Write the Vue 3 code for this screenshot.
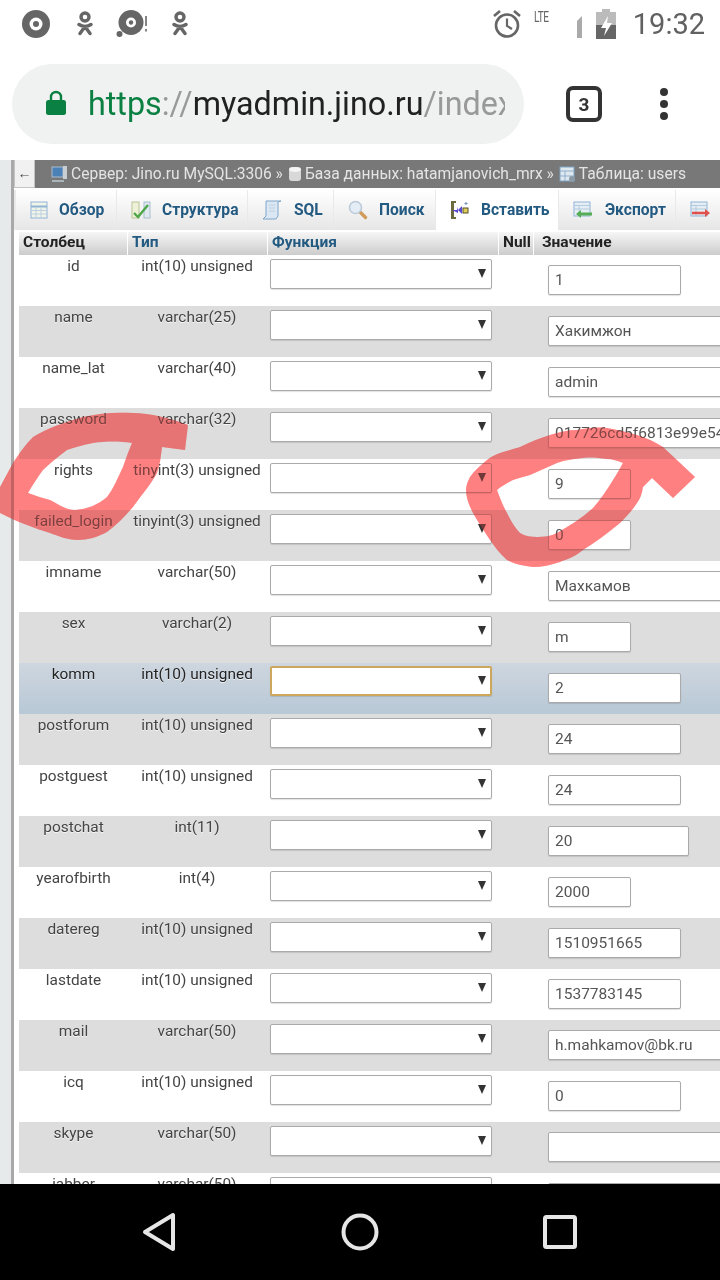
<script setup>
const rows = [
  { n: 'id', t: 'int(10) unsigned', v: '1', w: 133 },
  { n: 'name', t: 'varchar(25)', v: 'Хакимжон', w: 190, c: 'g' },
  { n: 'name_lat', t: 'varchar(40)', v: 'admin', w: 190 },
  { n: 'password', t: 'varchar(32)', v: '017726cd5f6813e99e54', w: 190, c: 'g' },
  { n: 'rights', t: 'tinyint(3) unsigned', v: '9', w: 83 },
  { n: 'failed_login', t: 'tinyint(3) unsigned', v: '0', w: 83, c: 'g' },
  { n: 'imname', t: 'varchar(50)', v: 'Махкамов', w: 190 },
  { n: 'sex', t: 'varchar(2)', v: 'm', w: 83, c: 'g' },
  { n: 'komm', t: 'int(10) unsigned', v: '2', w: 133, c: 'h', focus: true },
  { n: 'postforum', t: 'int(10) unsigned', v: '24', w: 133, c: 'g' },
  { n: 'postguest', t: 'int(10) unsigned', v: '24', w: 133 },
  { n: 'postchat', t: 'int(11)', v: '20', w: 141, c: 'g' },
  { n: 'yearofbirth', t: 'int(4)', v: '2000', w: 83 },
  { n: 'datereg', t: 'int(10) unsigned', v: '1510951665', w: 133, c: 'g' },
  { n: 'lastdate', t: 'int(10) unsigned', v: '1537783145', w: 133 },
  { n: 'mail', t: 'varchar(50)', v: 'h.mahkamov@bk.ru', w: 190, c: 'g' },
  { n: 'icq', t: 'int(10) unsigned', v: '0', w: 133 },
  { n: 'skype', t: 'varchar(50)', v: '', w: 190, c: 'g' },
  { n: 'jabber', t: 'varchar(50)', v: '', w: 190 },
]
const marks = [
  'M188 425C170 418 150 413 133 413C115 412 100 413 83 417C65 422 48 428 33 437C25 445 18 455 13 463L0 487V513C10 518 18 522 27 525C35 528 43 531 50 533C58 536 68 540 77 540C88 540 98 537 107 532C117 525 125 516 133 507C143 493 151 484 157 473C160 465 161 455 162 447L185 450ZM132 443C120 441 106 441 93 443C83 445 75 447 67 450C58 457 50 463 43 470C37 478 32 486 28 493C36 496 43 498 50 500C58 504 66 510 75 510C87 509 98 505 107 497C114 488 118 477 123 467C126 458 129 450 132 443Z',
  'M695 477L673 498L652 478L643 487C642 494 640 499 637 503C632 511 626 517 620 523C608 533 596 542 583 550C576 556 568 559 560 562C551 565 542 567 533 567C523 566 514 564 507 560C500 554 495 547 490 540C484 531 478 522 473 513C469 505 466 498 466 490C466 485 468 481 470 477C475 470 481 465 487 460C492 456 497 454 503 452C509 450 514 449 520 447C530 442 540 438 550 435C559 432 568 430 577 430C587 428 597 427 607 428C618 430 628 432 637 435C647 438 655 442 663 447ZM623 463C618 461 612 459 607 459C599 458 591 457 583 458C574 459 565 460 557 463C548 467 539 471 530 475C524 477 518 478 513 480C507 483 502 486 497 490C500 498 503 506 507 513C511 521 515 528 520 533C525 536 531 537 537 537C544 537 551 536 557 533C569 526 582 518 593 508C600 500 607 490 613 480C617 474 620 468 623 463Z',
]
</script>

<template>
  <div class="phone">
    <header class="status">
      <div class="st-left">
        <svg width="28" height="28" viewBox="0 0 28 28"><circle cx="14" cy="14" r="14" fill="#666"/><circle cx="14" cy="14" r="6.5" fill="#fff"/><circle cx="14" cy="14" r="3" fill="#666"/></svg>
        <svg class="ok" width="16" height="26" viewBox="0 0 16 26"><circle cx="8" cy="6" r="4" fill="none" stroke="#666" stroke-width="3.4"/><path d="M2 13.5c3.5 2.4 8.5 2.4 12 0M8 15.5l-5 7M8 15.5l5 7" fill="none" stroke="#666" stroke-width="3.4" stroke-linecap="round"/></svg>
        <svg class="disc2" width="34" height="28" viewBox="0 0 34 28"><circle cx="15" cy="12.5" r="12.5" fill="#666"/><circle cx="15" cy="12.5" r="5" fill="#fff"/><circle cx="15" cy="12.5" r="2.2" fill="#666"/><circle cx="3.5" cy="24" r="3" fill="#666"/><path d="M30 6v10M30 19v2.5" stroke="#666" stroke-width="1.6"/></svg>
        <svg class="ok" width="16" height="26" viewBox="0 0 16 26"><circle cx="8" cy="6" r="4" fill="none" stroke="#666" stroke-width="3.4"/><path d="M2 13.5c3.5 2.4 8.5 2.4 12 0M8 15.5l-5 7M8 15.5l5 7" fill="none" stroke="#666" stroke-width="3.4" stroke-linecap="round"/></svg>
      </div>
      <div class="st-right">
        <svg width="30" height="30" viewBox="0 0 30 30"><circle cx="15" cy="16.5" r="11" fill="none" stroke="#666" stroke-width="2.6"/><path d="M15 9.5v7.5l5 3" fill="none" stroke="#666" stroke-width="2.2"/><path d="M2 7l6-5M28 7l-6-5" stroke="#666" stroke-width="2.6"/></svg>
        <span class="lte">LTE</span>
        <svg class="signal" width="6" height="22" viewBox="0 0 6 22"><path d="M6 0v22H1V5z" fill="#aaa"/></svg>
        <svg class="batt" width="20" height="30" viewBox="0 0 20 30"><path d="M6 0h8v3h6v27H0V3h6z" fill="#bbb"/><path d="M0 16h20v14H0z" fill="#666"/><path d="M12 7l-7 12h5l-2 8 8-13h-5z" fill="#fff"/></svg>
        <span class="time">19:32</span>
      </div>
    </header>

    <div class="toolbar">
      <div class="omni">
        <svg class="lock" width="20" height="26" viewBox="0 0 20 26"><path d="M5 11V7a5 5 0 0 1 10 0v4" fill="none" stroke="#0b8043" stroke-width="2.4"/><rect y="10" width="20" height="15" rx="2.5" fill="#0b8043"/></svg>
        <div class="url"><span class="u-g">https</span><span class="u-m">://</span><span class="u-d">myadmin.jino.ru</span><span class="u-m">/index.php</span></div>
      </div>
      <div class="tabs-count">3</div>
      <div class="dots"><i></i><i></i><i></i></div>
    </div>

    <main class="page">
      <div class="gutter"></div>
      <div class="content">
        <div class="crumb">
          <div class="back">←</div>
          <div class="crumb-bar">
            <svg width="19" height="18" viewBox="0 0 19 18"><rect x="3" y="2" width="11" height="10" fill="#4a82b8" stroke="#a9bccd"/><rect x="14" y="1" width="4" height="13" fill="#c8ced2"/><path d="M3 15h12v2H3z" fill="#a9b3ba"/></svg>
            <span>Сервер: Jino.ru MySQL:3306 »</span>
            <svg width="14" height="16" viewBox="0 0 14 16"><rect x="1" y="1" width="12" height="14" rx="3" fill="#d8d8d8"/><ellipse cx="7" cy="3.5" rx="6" ry="2.5" fill="#f5f5f5"/></svg>
            <span>База данных: hatamjanovich_mrx »</span>
            <svg width="17" height="17" viewBox="0 0 17 17"><rect x="1" y="1" width="14" height="14" fill="#dfe8ef" stroke="#7fa3c4"/><path d="M1 5h14M6 5v10M1 10h14" stroke="#8fb0cc"/><circle cx="13" cy="13" r="3" fill="#8a9aa6"/></svg>
            <span>Таблица: users</span>
          </div>
        </div>

        <nav class="tabs">
          <a class="tab t1"><svg width="18" height="18" viewBox="0 0 18 18"><rect x="1" y="1" width="16" height="16" fill="#f1f4e8" stroke="#8fb4d6"/><path d="M1 5.5h16" stroke="#8fb4d6" stroke-width="2"/><path d="M6 6v11M11 6v11M1 9.5h16M1 13h16" stroke="#bcd0e2"/></svg><span>Обзор</span></a>
          <a class="tab t2"><svg width="20" height="18" viewBox="0 0 20 18"><rect x="1" y="1" width="7" height="16" fill="#eef1d8" stroke="#b9c596"/><rect x="13" y="1" width="6" height="16" fill="#dfe9ef" stroke="#a6bfd0"/><path d="M3 12l4 4 10-12" fill="none" stroke="#4fa64a" stroke-width="2.4"/></svg><span>Структура</span></a>
          <a class="tab t3"><svg width="20" height="20" viewBox="0 0 20 20"><path d="M4 1h15l-3 1v14l-2 3H1l3-3z" fill="#dbe7f3" stroke="#7ea5cb"/><path d="M7 5h6M7 8h6M7 11h6" stroke="#bcd0e2"/></svg><span>SQL</span></a>
          <a class="tab t4"><svg width="20" height="20" viewBox="0 0 20 20"><path d="M11.5 11.5l6 6" stroke="#d09a5a" stroke-width="3.4" stroke-linecap="round"/><circle cx="7.5" cy="7.5" r="6" fill="#e4edf6" stroke="#bccbd9" stroke-width="1.6"/></svg><span>Поиск</span></a>
          <a class="tab t5 active"><svg width="20" height="20" viewBox="0 0 20 20"><path d="M1 1h5v2H4v14h2v2H1z" fill="#6b6b3e"/><path d="M2 10h5l1-3v6zM8 10l4-4v8z" fill="#5a4ad0"/><rect x="13" y="8" width="5" height="5" fill="#e0cc58" stroke="#54502a"/><path d="M16 2v3M14.5 3.5h3" stroke="#6b8fbd"/></svg><span>Вставить</span></a>
          <a class="tab t6"><svg width="20" height="18" viewBox="0 0 20 18"><rect x="1" y="1" width="16" height="14" fill="#e6eef4" stroke="#8fb4d6"/><path d="M1 4.5h16M6 5v10M1 8h16" stroke="#b2cbe0"/><path d="M5 13h14" stroke="#55ad55" stroke-width="3"/><path d="M8 9l-5 4 5 4z" fill="#55ad55"/></svg><span>Экспорт</span></a>
          <a class="tab t7"><svg width="20" height="18" viewBox="0 0 20 18"><rect x="1" y="1" width="16" height="14" fill="#e6eef4" stroke="#8fb4d6"/><path d="M1 4.5h16M6 5v10M1 8h16" stroke="#b2cbe0"/><path d="M2 12h14" stroke="#e0504c" stroke-width="2.6"/><path d="M15 8l5 4-5 4z" fill="#e0504c"/></svg></a>
        </nav>

        <div class="table">
          <div class="row head">
            <div class="c1 dark">Столбец</div>
            <div class="c2">Тип</div>
            <div class="c3">Функция</div>
            <div class="c4 dark">Null</div>
            <div class="c5 dark">Значение</div>
          </div>
          <div v-for="r in rows" :key="r.n" class="row" :class="r.c">
            <div class="c1 name">{{ r.n }}</div>
            <div class="c2 name">{{ r.t }}</div>
            <div class="c3"><div class="sel" :class="{ focus: r.focus }"><b></b></div></div>
            <div class="c4"></div>
            <div class="c5"><div class="inp" :style="{ width: r.w + 'px' }">{{ r.v }}</div></div>
          </div>
        </div>
      </div>

      <svg class="scribbles mult" width="720" height="1024" viewBox="0 160 720 1024">
        <path v-for="d in marks" :key="d" fill-rule="evenodd" :d="d"/>
      </svg>
      <svg class="scribbles veil" width="720" height="1024" viewBox="0 160 720 1024">
        <path v-for="d in marks" :key="d" fill-rule="evenodd" :d="d"/>
      </svg>
    </main>

    <footer class="navbar">
      <svg width="36" height="40" viewBox="0 0 36 40"><path d="M31 3v34L3 20z" fill="none" stroke="#e6e6e6" stroke-width="4" stroke-linejoin="round"/></svg>
      <svg width="38" height="38" viewBox="0 0 38 38"><circle cx="19" cy="19" r="16.5" fill="none" stroke="#e6e6e6" stroke-width="4"/></svg>
      <svg width="34" height="34" viewBox="0 0 34 34"><rect x="2" y="2" width="30" height="30" rx="1.5" fill="none" stroke="#e6e6e6" stroke-width="4"/></svg>
    </footer>
  </div>
</template>

<style>
html, body { margin: 0; padding: 0; background: #fff; }
</style>

<style scoped>
.phone { width: 720px; height: 1280px; display: flex; flex-direction: column; overflow: hidden; background: #fff; font-family: Roboto, "Noto Sans", sans-serif; }
.status { height: 48px; flex: none; display: flex; justify-content: space-between; align-items: center; padding: 0 15px 0 22px; box-sizing: border-box; }
.st-left { display: flex; align-items: center; }
.ok { margin-left: 27px; }
.disc2 { margin-left: 23px; }
.disc2 + .ok { margin-left: 22px; }
.st-right { display: flex; align-items: center; }
.lte { font-size: 14px; color: #666; width: 16px; margin: -14px 0 0 12px; transform: scaleX(.72); transform-origin: left; letter-spacing: -.5px; }
.signal { margin: 6px 0 0 26px; }
.batt { margin-left: 14px; }
.time { font-size: 29px; color: #616161; margin-left: 17px; line-height: 48px; }

.toolbar { height: 112px; flex: none; display: flex; align-items: flex-start; padding: 16px 0 0 12px; box-sizing: border-box; }
.omni { width: 512px; height: 80px; border-radius: 40px; background: #eff2f1; display: flex; align-items: center; padding: 0 19px 0 34px; box-sizing: border-box; overflow: hidden; }
.lock { flex: none; margin-right: 22px; margin-top: -2px; }
.url { font-size: 32.3px; white-space: nowrap; overflow: hidden; flex: 1; line-height: 80px; }
.u-g { color: #0b8043; }
.u-m { color: #999; }
.u-d { color: #212121; }
.tabs-count { width: 36px; height: 36px; margin: 22px 0 0 42px; border: 4px solid #333; border-radius: 7px; box-sizing: border-box; display: flex; align-items: center; justify-content: center; font-size: 19px; font-weight: 700; color: #333; }
.dots { margin: 24px 0 0 58px; display: flex; flex-direction: column; gap: 4px; }
.dots i { width: 8px; height: 8px; border-radius: 50%; background: #333; display: block; }

.page { position: relative; height: 1024px; flex: none; display: flex; overflow: hidden; }
.gutter { flex: none; width: 11px; background: #e6eaea; border-right: 3px solid #a9a9a9; }
.content { flex: 1; min-width: 0; overflow: hidden; }
.crumb { height: 28px; display: flex; background: #e9e9e9; }
.back { width: 21px; box-sizing: border-box; background: #f1f1f1; border: 1px solid #c4c4c4; border-top: 0; color: #444; font-size: 14px; text-align: center; line-height: 27px; flex: none; }
.crumb-bar { flex: 1; display: flex; align-items: center; gap: 3px; padding-left: 14px; background: #787878; color: #e4e4e4; font-size: 15.6px; white-space: nowrap; overflow: hidden; }
.crumb-bar span { margin-right: 2px; }

.tabs { margin-top: 2px; height: 40px; display: flex; padding-left: 2px; background: #e9e9e9; overflow: hidden; }
.tab { flex: none; box-sizing: border-box; height: 40px; display: flex; align-items: center; gap: 11px; padding-left: 14px; margin-right: 1px; background: linear-gradient(#fff, #e6e6e6); color: #235a81; font-size: 15.6px; font-weight: 700; white-space: nowrap; }
.t1 { width: 100px; }
.t2 { width: 130px; }
.t3 { width: 85px; gap: 12px; }
.t4 { width: 101px; }
.t5 { width: 122px; }
.t6 { width: 116px; gap: 12px; }
.t7 { width: 60px; }
.tab.active { background: #fff; }

.table { margin: 2px 0 0 5px; width: 701px; }
.row { display: grid; grid-template-columns: 109px 140px 231px 35px 186px; height: 51px; background: #fff; }
.row.g { background: #ddd; }
.row.h { background: linear-gradient(#ced6df, #b8c8d6); }
.row.head { height: 23px; background: none; font-size: 15.5px; font-weight: 700; color: #235a81; line-height: 21px; }
.row.head > div { background: linear-gradient(#f6f6f6, #ccc); padding: 0 0 0 4px; overflow: hidden; box-sizing: border-box; margin-right: 1px; white-space: nowrap; }
.row.head > .c5 { margin-right: 0; padding-left: 8px; }
.head .dark { color: #222; }
.name { text-align: center; color: #444; font-size: 15.4px; padding-top: 3px; line-height: 17px; text-shadow: 0 1px 0 rgba(255,255,255,.7); }
.c2.name { padding-right: 2px; }
.row.h .name { color: #222; }
.c3 { padding: 4px 0 0 2px; box-sizing: border-box; }
.sel { position: relative; width: 222px; height: 30px; box-sizing: border-box; background: #fff; border: 1px solid #aaa; border-radius: 2px; box-shadow: 0 1px 1px rgba(0,0,0,.12); }
.sel b { position: absolute; right: 5px; top: 9px; width: 0; height: 0; border-left: 4px solid transparent; border-right: 4px solid transparent; border-top: 9px solid #333; }
.sel.focus { border: 2px solid #cda85c; margin-top: -1px; }
.sel.focus b { right: 4px; top: 8px; }
.c5 { padding: 10px 0 0 14px; box-sizing: border-box; overflow: hidden; }
.inp { height: 30px; box-sizing: border-box; background: #fff; border: 1px solid #aaa; border-radius: 2px; box-shadow: 0 1px 1px rgba(0,0,0,.12); padding-left: 6px; font-size: 15.5px; line-height: 28px; color: #555; white-space: nowrap; overflow: hidden; }

.scribbles { position: absolute; left: 0; top: 0; pointer-events: none; }
.mult { fill: #ff8080; mix-blend-mode: multiply; }
.veil { fill: rgba(255,128,128,.3); }

.navbar { height: 96px; flex: none; background: #000; display: flex; align-items: center; padding-left: 142px; box-sizing: border-box; }
.navbar svg { flex: none; }
.navbar svg:nth-child(2) { margin-left: 163px; }
.navbar svg:nth-child(3) { margin-left: 164px; }
</style>
